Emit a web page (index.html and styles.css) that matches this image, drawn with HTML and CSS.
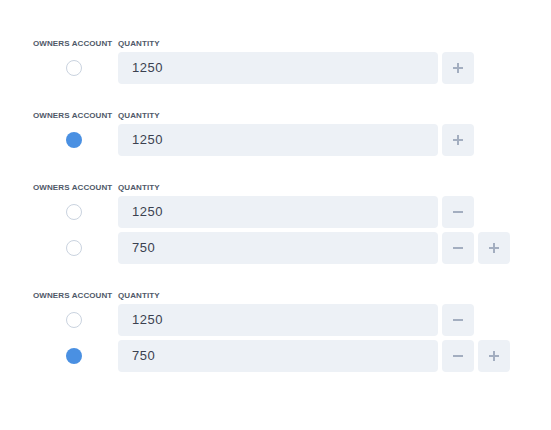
FILE: index.html
```html
<!DOCTYPE html>
<html>
<head>
<meta charset="utf-8">
<link rel="stylesheet" href="styles.css">
</head>
<body>
<div class="page">
  <section class="block">
    <div class="row head"><span class="lbl">OWNERS ACCOUNT</span><span class="lbl">QUANTITY</span></div>
    <div class="row">
      <span class="cell"><span class="radio"></span></span>
      <div class="input">1250</div>
      <button class="btn"><svg viewBox="0 0 10 10" width="10" height="10"><path d="M5 0V10M0 5H10"/></svg></button>
    </div>
  </section>
  <section class="block">
    <div class="row head"><span class="lbl">OWNERS ACCOUNT</span><span class="lbl">QUANTITY</span></div>
    <div class="row">
      <span class="cell"><span class="radio on"></span></span>
      <div class="input">1250</div>
      <button class="btn"><svg viewBox="0 0 10 10" width="10" height="10"><path d="M5 0V10M0 5H10"/></svg></button>
    </div>
  </section>
  <section class="block">
    <div class="row head"><span class="lbl">OWNERS ACCOUNT</span><span class="lbl">QUANTITY</span></div>
    <div class="row">
      <span class="cell"><span class="radio"></span></span>
      <div class="input">1250</div>
      <button class="btn"><svg viewBox="0 0 10 10" width="10" height="10"><path d="M0 5H10"/></svg></button>
    </div>
    <div class="row">
      <span class="cell"><span class="radio"></span></span>
      <div class="input">750</div>
      <button class="btn"><svg viewBox="0 0 10 10" width="10" height="10"><path d="M0 5H10"/></svg></button>
      <button class="btn"><svg viewBox="0 0 10 10" width="10" height="10"><path d="M5 0V10M0 5H10"/></svg></button>
    </div>
  </section>
  <section class="block">
    <div class="row head"><span class="lbl">OWNERS ACCOUNT</span><span class="lbl">QUANTITY</span></div>
    <div class="row">
      <span class="cell"><span class="radio"></span></span>
      <div class="input">1250</div>
      <button class="btn"><svg viewBox="0 0 10 10" width="10" height="10"><path d="M0 5H10"/></svg></button>
    </div>
    <div class="row">
      <span class="cell"><span class="radio on"></span></span>
      <div class="input">750</div>
      <button class="btn"><svg viewBox="0 0 10 10" width="10" height="10"><path d="M0 5H10"/></svg></button>
      <button class="btn"><svg viewBox="0 0 10 10" width="10" height="10"><path d="M5 0V10M0 5H10"/></svg></button>
    </div>
  </section>
</div>
</body>
</html>
```

FILE: styles.css
```css
html, body {
  margin: 0;
  padding: 0;
  background: #ffffff;
}
body {
  font-family: "Liberation Sans", Arial, sans-serif;
}
.page {
  padding: 38px 0 0 33px;
  display: flex;
  flex-direction: column;
  gap: 26px;
}
.block {
  display: flex;
  flex-direction: column;
  gap: 4px;
}
.row {
  display: grid;
  grid-template-columns: 81px 320px 32px 32px;
  column-gap: 4px;
  height: 32px;
  align-items: center;
}
.row.head {
  height: 12px;
  margin-bottom: -2px;
}
.lbl {
  font-size: 8px;
  line-height: 12px;
  font-weight: 700;
  letter-spacing: 0.1px;
  color: #4f5868;
  white-space: nowrap;
}
.cell {
  display: flex;
  justify-content: center;
  align-items: center;
  height: 32px;
}
.radio {
  width: 16px;
  height: 16px;
  box-sizing: border-box;
  border-radius: 50%;
  border: 1px solid #cad3df;
  background: #ffffff;
}
.radio.on {
  border: none;
  background: #4a90e2;
}
.input {
  height: 32px;
  box-sizing: border-box;
  background: #edf1f6;
  border-radius: 4px;
  padding-left: 14px;
  font-size: 13px;
  line-height: 32px;
  letter-spacing: 0.5px;
  color: #3a4150;
}
.btn {
  width: 32px;
  height: 32px;
  border: none;
  padding: 0;
  margin: 0;
  background: #edf1f6;
  border-radius: 4px;
  display: flex;
  align-items: center;
  justify-content: center;
}
.btn svg {
  display: block;
  stroke: #a3aec0;
  stroke-width: 2;
  fill: none;
}
```
